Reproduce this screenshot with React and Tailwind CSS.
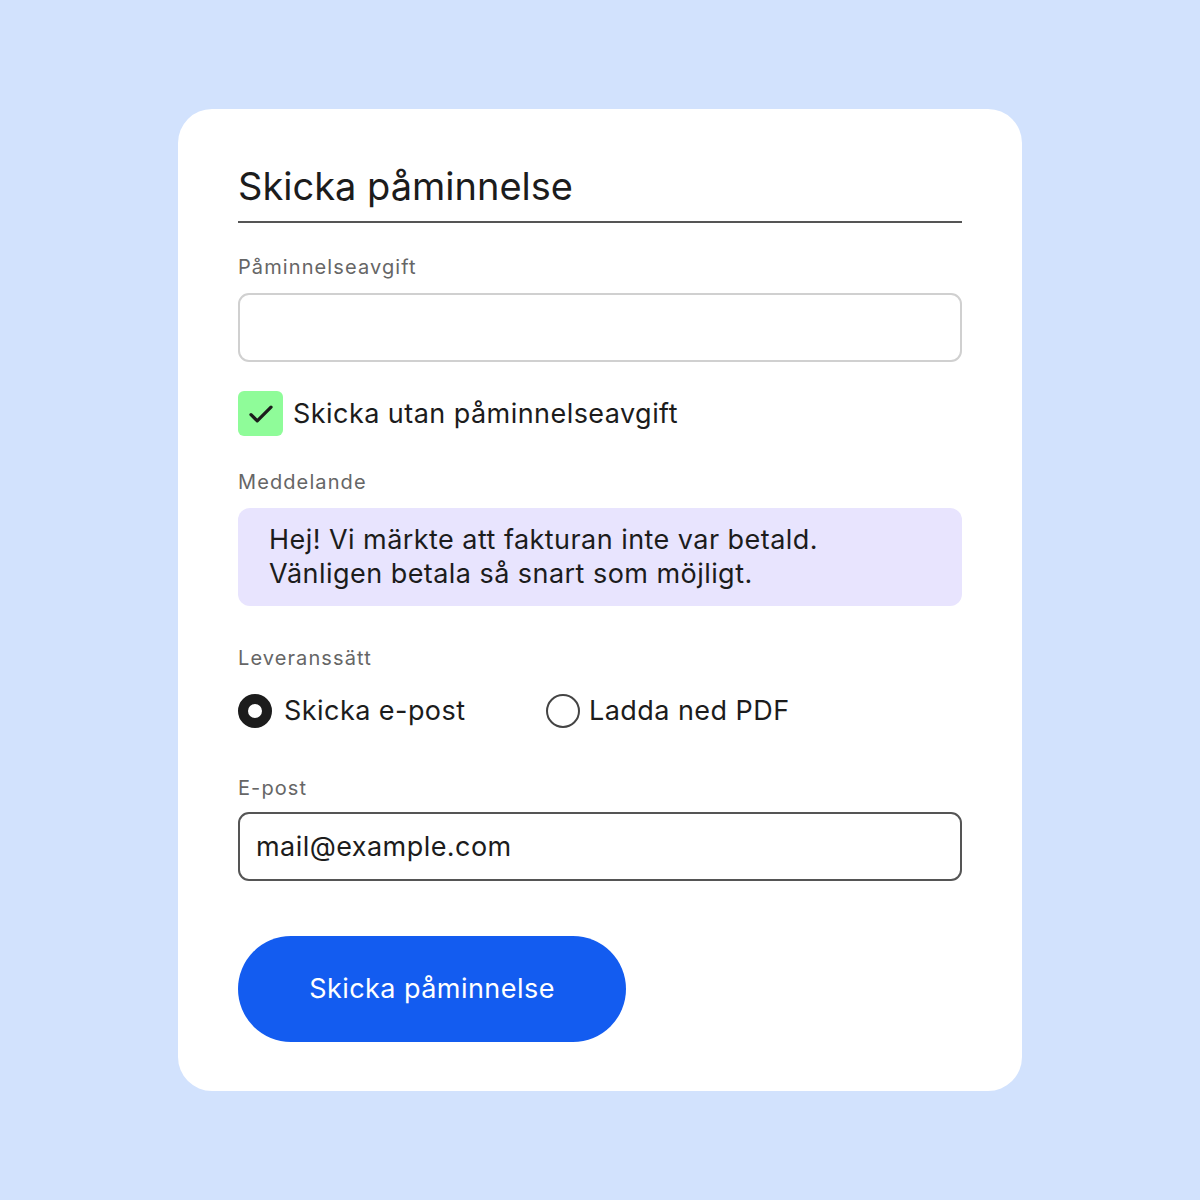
import { useState } from 'react'

export default function App() {
  const [withoutFee, setWithoutFee] = useState(true)
  const [delivery, setDelivery] = useState('email')

  return (
    <div className="min-h-[1200px] w-full bg-[#d2e2fd] flex justify-center pt-[109px] font-['Inter',sans-serif]">
      <div className="w-[844px] h-[982px] bg-white rounded-[34px] px-[60px] pt-[49px]">
        {/* Title */}
        <h1 className="text-[38px] leading-[56px] text-[#1c1c1c] font-normal pb-[7px] border-b-2 border-[#555]">
          Skicka påminnelse
        </h1>

        {/* Fee */}
        <label className="block mt-[30px] text-[20px] leading-[28px] tracking-[1.1px] text-[#666]">Påminnelseavgift</label>
        <input
          className="block mt-[12px] w-full h-[69px] rounded-[11px] border-2 border-[#d0d0d0] px-[18px] text-[27px] outline-none"
        />

        {/* Checkbox */}
        <button
          onClick={() => setWithoutFee(!withoutFee)}
          className="mt-[29px] flex items-center gap-[10px]"
        >
          <span className="w-[45px] h-[45px] rounded-[6px] bg-[#8ffc99] flex items-center justify-center">
            {withoutFee && (
              <svg width="30" height="30" viewBox="0 0 24 24" fill="none" stroke="#1c1c1c" strokeWidth="2.6" strokeLinecap="round" strokeLinejoin="round">
                <path d="M4 12.5l5 5L20 6.5" />
              </svg>
            )}
          </span>
          <span className="text-[27px] leading-[34px] tracking-[0.45px] text-[#1c1c1c]">Skicka utan påminnelseavgift</span>
        </button>

        {/* Message */}
        <label className="block mt-[32px] text-[20px] leading-[28px] tracking-[1.1px] text-[#666]">Meddelande</label>
        <div className="mt-[12px] w-full rounded-[12px] bg-[#e8e4fe] pl-[31px] pt-[15px] pb-[15px] text-[27px] leading-[34px] tracking-[0.45px] text-[#1c1c1c]">
          <p>Hej! Vi märkte att fakturan inte var betald.</p>
          <p>Vänligen betala så snart som möjligt.</p>
        </div>

        {/* Delivery */}
        <label className="block mt-[38px] text-[20px] leading-[28px] tracking-[1.1px] text-[#666]">Leveranssätt</label>
        <div className="mt-[22px] flex items-center">
          <button onClick={() => setDelivery('email')} className="flex items-center gap-[12px] w-[308px]">
            <span
              className={
                delivery === 'email'
                  ? 'w-[34px] h-[34px] rounded-full border-[10px] border-[#1c1c1c] bg-white'
                  : 'w-[34px] h-[34px] rounded-full border-2 border-[#444] bg-white'
              }
            />
            <span className="text-[27px] leading-[34px] tracking-[0.45px] text-[#1c1c1c]">Skicka e-post</span>
          </button>
          <button onClick={() => setDelivery('pdf')} className="flex items-center gap-[9px]">
            <span
              className={
                delivery === 'pdf'
                  ? 'w-[34px] h-[34px] rounded-full border-[10px] border-[#1c1c1c] bg-white'
                  : 'w-[34px] h-[34px] rounded-full border-2 border-[#444] bg-white'
              }
            />
            <span className="text-[27px] leading-[34px] tracking-[0.45px] text-[#1c1c1c]">Ladda ned PDF</span>
          </button>
        </div>

        {/* Email */}
        <label className="block mt-[46px] text-[20px] leading-[28px] tracking-[1.1px] text-[#666]">E-post</label>
        <input
          defaultValue="mail@example.com"
          className="block mt-[10px] w-full h-[69px] rounded-[11px] border-2 border-[#555] px-[16px] text-[27px] tracking-[0.45px] text-[#1c1c1c] outline-none"
        />

        {/* Submit */}
        <button className="mt-[55px] w-[388px] h-[106px] rounded-full bg-[#135cf0] text-white text-[27px] tracking-[0.45px]">
          Skicka påminnelse
        </button>
      </div>
    </div>
  )
}
